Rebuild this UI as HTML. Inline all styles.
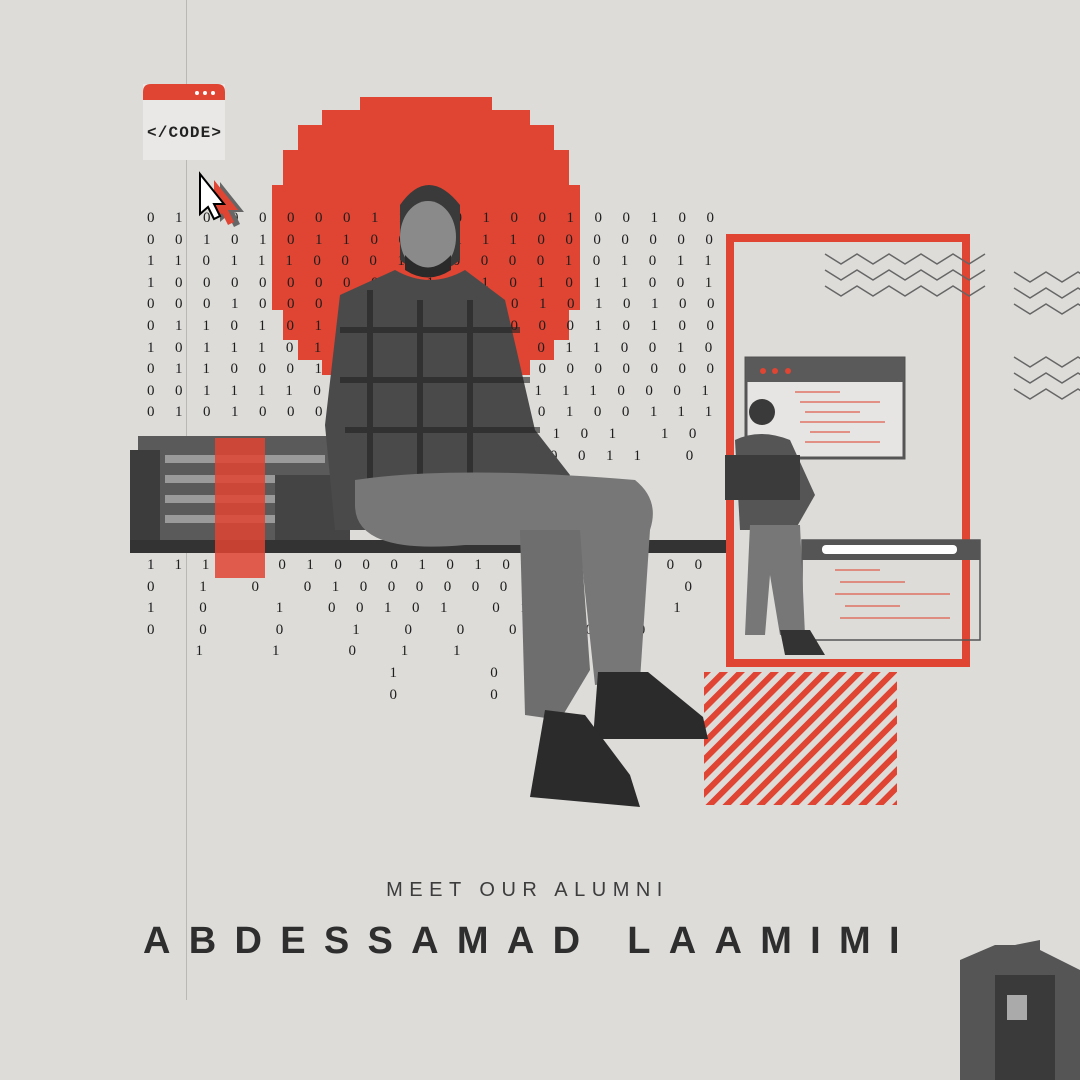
<!DOCTYPE html>
<html><head><meta charset="utf-8"><style>
html,body{margin:0;padding:0}
body{width:1080px;height:1080px;background:#dddcd9;position:relative;overflow:hidden;font-family:"Liberation Sans",sans-serif}
.abs{position:absolute}
pre{margin:0;font-family:"Liberation Serif",serif;font-size:15px;line-height:21.6px;letter-spacing:20.5px;color:#1e1e1e;position:absolute}
</style></head><body>
<div class="abs" style="left:186px;top:0;width:1px;height:1000px;background:#b9b8b5"></div>

<svg class="abs" style="left:0;top:0" width="1080" height="1080">
<g fill="#e04432">
<rect x="360" y="97" width="132" height="290"/>
<rect x="322" y="110" width="208" height="265"/>
<rect x="298" y="125" width="256" height="235"/>
<rect x="283" y="150" width="286" height="190"/>
<rect x="272" y="185" width="308" height="125"/>
</g>
</svg>

<pre style="left:147px;top:208px">010000001100100100100
001010110001110000000
110111000110000101011
100000000111101011001
000100000000001010100
011010100100100010100
101110110101010110010
011000100100100000000
001111011111011110001
010100001110010100111
         1 01 11101 10
            00010011 0
</pre>
<pre style="left:147px;top:555px">111  01000101001 0100
0 1 0 0100000010  1 0
1 0  1 00101 01   1 1
0 0  0  1 0 0 0  0 0
  1  1  0 1 1  0   1
          1   0
          0   0
</pre>

<svg class="abs" style="left:0;top:0" width="1080" height="1080">
<rect x="138" y="436" width="212" height="104" fill="#5a5a5a"/>
<rect x="130" y="450" width="30" height="90" fill="#3c3c3c"/>
<g fill="#9a9a9a"><rect x="165" y="455" width="160" height="8"/><rect x="165" y="475" width="160" height="8"/><rect x="165" y="495" width="160" height="8"/><rect x="165" y="515" width="160" height="8"/></g>
<rect x="275" y="475" width="75" height="65" fill="#444"/>
<rect x="130" y="540" width="600" height="13" fill="#333"/>
<rect x="215" y="438" width="50" height="140" fill="#e04432" opacity=".85"/>
<rect x="143" y="84" width="82" height="76" fill="#e9e8e6"/>
<path d="M143 92 q0-8 8-8 h66 q8 0 8 8 v8 h-82z" fill="#e04432"/>
<circle cx="197" cy="93" r="2" fill="#fff"/><circle cx="205" cy="93" r="2" fill="#fff"/><circle cx="213" cy="93" r="2" fill="#fff"/>
<text x="147" y="137" font-family="Liberation Mono" font-size="16" font-weight="bold" fill="#222" textLength="74">&lt;/CODE&gt;</text>
<path d="M208 178 v40 l8-7 6 12 6-3 -6-12 h10z" fill="#666" transform="translate(12,4)"/>
<path d="M208 178 v40 l8-7 6 12 6-3 -6-12 h10z" fill="#e04432" transform="translate(6,2)"/>
<path d="M200 174 v40 l8-7 6 12 6-3 -6-12 h10z" fill="#fff" stroke="#000" stroke-width="2"/>
<rect x="730" y="238" width="236" height="425" fill="none" stroke="#e04432" stroke-width="8"/>
<defs><pattern id="h" width="12" height="12" patternUnits="userSpaceOnUse" patternTransform="rotate(-45)"><rect width="12" height="6" fill="#e04432"/></pattern></defs>
<rect x="704" y="672" width="193" height="133" fill="url(#h)"/>
<g fill="none" stroke="#666" stroke-width="1.5">
<path d="M825 254 l16 10 16-10 16 10 16-10 16 10 16-10 16 10 16-10 16 10 16-10 "/>
<path d="M825 270 l16 10 16-10 16 10 16-10 16 10 16-10 16 10 16-10 16 10 16-10 "/>
<path d="M825 286 l16 10 16-10 16 10 16-10 16 10 16-10 16 10 16-10 16 10 16-10 "/>
<path d="M1014 272 l16 10 16-10 16 10 16-10 16 10"/>
<path d="M1014 288 l16 10 16-10 16 10 16-10 16 10"/>
<path d="M1014 304 l16 10 16-10 16 10 16-10 16 10"/>
<path d="M1014 357 l16 10 16-10 16 10 16-10 16 10"/>
<path d="M1014 373 l16 10 16-10 16 10 16-10 16 10"/>
<path d="M1014 389 l16 10 16-10 16 10 16-10 16 10"/>
</g>
<rect x="746" y="358" width="158" height="100" fill="#e6e5e3" stroke="#555" stroke-width="3"/>
<rect x="746" y="358" width="158" height="24" fill="#5a5a5a"/>
<circle cx="763" cy="371" r="3" fill="#e04432"/><circle cx="775" cy="371" r="3" fill="#e04432"/><circle cx="788" cy="371" r="3" fill="#e04432"/>
<g stroke="#e04432" stroke-width="1.5" opacity=".7"><line x1="795" y1="392" x2="840" y2="392"/><line x1="800" y1="402" x2="880" y2="402"/><line x1="805" y1="412" x2="860" y2="412"/><line x1="800" y1="422" x2="885" y2="422"/><line x1="810" y1="432" x2="850" y2="432"/><line x1="805" y1="442" x2="880" y2="442"/></g>
<rect x="802" y="540" width="178" height="100" fill="none" stroke="#555" stroke-width="1.5"/>
<rect x="802" y="540" width="178" height="20" fill="#555"/>
<rect x="822" y="545" width="135" height="9" rx="4" fill="#fff"/>
<g stroke="#e04432" stroke-width="1.5" opacity=".7"><line x1="835" y1="570" x2="880" y2="570"/><line x1="840" y1="582" x2="905" y2="582"/><line x1="835" y1="594" x2="950" y2="594"/><line x1="845" y1="606" x2="900" y2="606"/><line x1="840" y1="618" x2="950" y2="618"/></g>
<circle cx="762" cy="412" r="13" fill="#3a3a3a"/>
<path d="M735 440 q25-12 55 0 l25 55 -20 35 h-55z" fill="#555"/>
<rect x="725" y="455" width="75" height="45" fill="#3b3b3b"/>
<path d="M750 525 h50 l5 110 h-25 l-10-60 -5 60 h-20z" fill="#777"/>
<path d="M780 630 h30 l15 25 h-40z" fill="#333"/>
<path d="M400 205 q28-40 60 0 v55 q-30 25-60 0z" fill="#3a3a3a"/>
<ellipse cx="428" cy="237" rx="28" ry="36" fill="#8a8a8a"/>
<path d="M405 255 q23 25 46 0 v15 q-23 15-46 0z" fill="#2a2a2a"/>
<path d="M395 270 q35 20 70 0 l40 30 30 130 35 45 -20 25 -60-15 -10 45 h-145 l-10-105 15-130z" fill="#4a4a4a"/>
<g stroke="#222" stroke-width="6" opacity=".6"><line x1="340" y1="330" x2="520" y2="330"/><line x1="340" y1="380" x2="530" y2="380"/><line x1="345" y1="430" x2="540" y2="430"/><line x1="370" y1="290" x2="370" y2="510"/><line x1="420" y1="300" x2="420" y2="510"/><line x1="470" y1="300" x2="470" y2="500"/></g>
<path d="M355 480 q100-15 280 0 q25 20 15 50 l-10 150 -45 5 -15-140 h-115 q-110 10-110-40z" fill="#777"/>
<path d="M520 530 h60 l10 140 -30 50 -35-5z" fill="#6e6e6e"/>
<path d="M598 672 l50 0 55 45 5 22 -115 0z" fill="#2b2b2b"/>
<path d="M545 710 l40 5 45 60 10 32 -110-10z" fill="#2b2b2b"/>
</svg>

<div class="abs" style="left:0;width:1055px;top:879px;text-align:center;font-size:20px;letter-spacing:6.5px;color:#3d3d3d">MEET OUR ALUMNI</div>
<div class="abs" style="left:143px;top:920px;font-size:38px;font-weight:bold;letter-spacing:18.3px;color:#2e2e2e;white-space:nowrap">ABDESSAMAD LAAMIMI</div>

<svg class="abs" style="left:955px;top:940px" width="125" height="140">
<path d="M5 140 V20 l35-15 h20 l25-5 v10 l40 20 V140z" fill="#555"/>
<rect x="40" y="35" width="60" height="105" fill="#3a3a3a"/>
<rect x="52" y="55" width="20" height="25" fill="#aaa"/>
</svg>
</body></html>
